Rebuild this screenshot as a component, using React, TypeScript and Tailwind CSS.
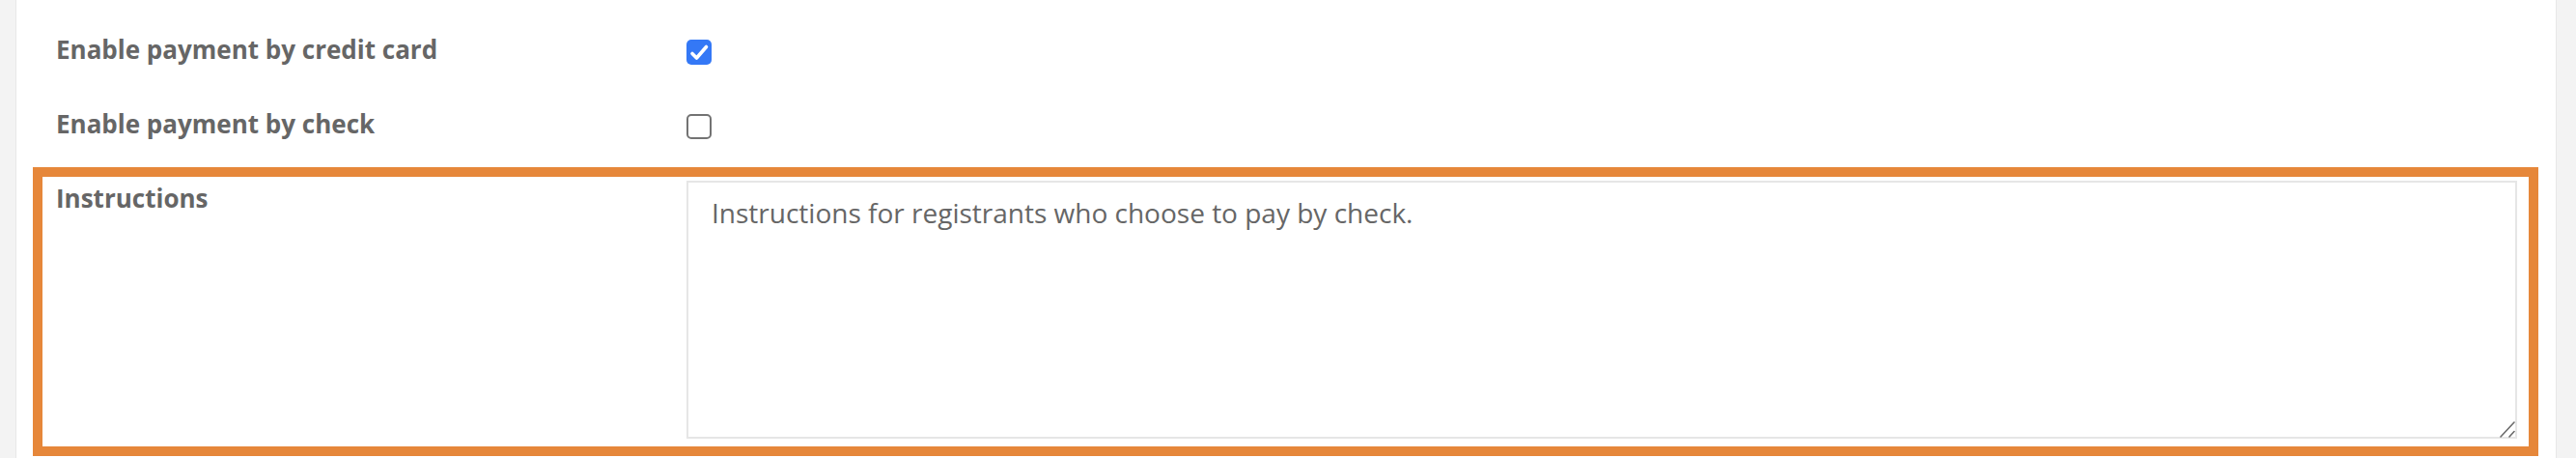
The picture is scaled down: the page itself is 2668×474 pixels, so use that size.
import React from 'react';

const font = { fontFamily: '"Open Sans", "Noto Sans", sans-serif' };

const Check: React.FC<{ checked?: boolean }> = ({ checked }) =>
  checked ? (
    <span className="mt-[23px] block h-[26px] w-[26px] rounded-[5px] bg-[#3478f6]">
      <svg width="26" height="26" viewBox="0 0 26 26" fill="none">
        <path d="M6 14.5 L10.5 19 L20.5 7.5" stroke="white" strokeWidth="3.6" strokeLinecap="round" strokeLinejoin="round" />
      </svg>
    </span>
  ) : (
    <span className="mt-[23px] block h-[26px] w-[26px] rounded-[5px] border-2 border-[#737373] bg-white" />
  );

const Row: React.FC<{ label: string; checked?: boolean }> = ({ label, checked }) => (
  <div className="flex h-[77px] items-start">
    <label className="mt-[20px] w-[653px] text-[26px] font-bold leading-[26px] text-[#666]">{label}</label>
    <Check checked={checked} />
  </div>
);

export default function App() {
  return (
    <div className="flex h-[474px] w-[2668px] bg-[#f3f3f3]" style={font}>
      <div className="ml-[16px] h-full w-[2632px] border-x border-[#e8e8e8] bg-white">
        <div className="pl-[41px] pt-[18px]">
          <Row label="Enable payment by credit card" checked />
          <Row label="Enable payment by check" />
        </div>
        <div className="ml-[17px] mt-px flex h-[299px] w-[2595px] items-start border-[10px] border-[#e6873a] pl-[14px]">
          <label className="mt-[9px] w-[653px] text-[26px] font-bold leading-[26px] text-[#666]">Instructions</label>
          <div className="relative mt-[4px] h-[267px] w-[1896px]">
            <textarea
              className="block h-full w-full resize-none border-2 border-[#e6e6e6] bg-white px-[24px] pt-[11px] text-[28px] leading-[40px] text-[#666] outline-none"
              defaultValue="Instructions for registrants who choose to pay by check."
            />
            {/* resize grip */}
            <svg className="pointer-events-none absolute bottom-[1px] right-[1px]" width="18" height="18" viewBox="0 0 18 18">
              <path d="M2 17 L16 2 M11 17 L16 11.5" stroke="#6b6b6b" strokeWidth="1.6" strokeLinecap="round" />
            </svg>
          </div>
        </div>
      </div>
    </div>
  );
}
